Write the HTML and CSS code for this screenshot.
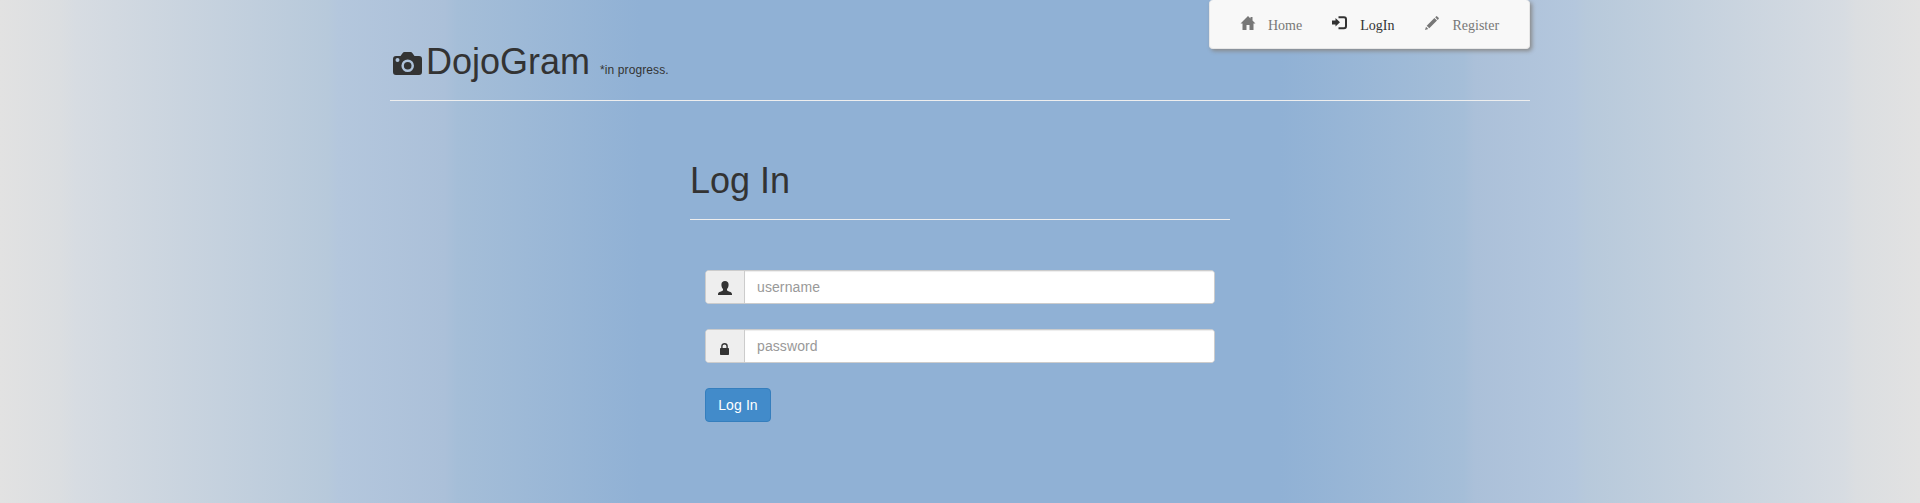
FILE: index.html
```html
<!DOCTYPE html>
<html lang="en">
<head>
<meta charset="utf-8">
<title>DojoGram</title>
<link rel="stylesheet" href="styles.css">
</head>
<body>
<div class="container">
  <header class="header">
    <h1 class="brand">
      <svg class="camera" viewBox="0 0 29 23"><path fill-rule="evenodd" d="M3 4H7.500L9.500 1.200Q10.300 0 11.500 0H17.500Q18.700 0 19.500 1.200L21.500 4H26Q29 4 29 7V20Q29 23 26 23H3Q0 23 0 20V7Q0 4 3 4ZM14.700 7.400A6.300 6.300 0 1 0 14.700 20A6.300 6.300 0 1 0 14.700 7.400ZM4.500 6A2 2 0 1 0 4.500 10A2 2 0 1 0 4.500 6Z"/><circle cx="14.700" cy="13.700" r="3.800"/></svg>
      <span>DojoGram</span>
      <small class="note">*in progress.</small>
    </h1>
    <nav class="nav">
      <a class="link"><svg class="icon" viewBox="0 0 14 14"><path d="M7 0L9.500 2.500V1H11.500V4.500L14.500 7.500H12.500V14H8.500V9H5.500V14H1.500V7.500H-.5Z"/></svg><span>Home</span></a>
      <a class="link active"><svg class="icon login" viewBox="0 0 15 14"><path d="M0 4.500H3.500V2L8 6.200L3.500 10.500V8.500H0Z"/><path d="M6.500 1.200H12Q14 1.200 14 3.200V10Q14 12.200 12 12.200H6.500" fill="none" stroke="currentColor" stroke-width="2"/></svg><span>LogIn</span></a>
      <a class="link register"><svg class="icon" viewBox="0 0 14 14"><path d="M0 14L1 10.700L3.300 13ZM1.700 9.700L9.400 2L12 4.600L4.300 12.300ZM10.200 1.300L11 .4Q11.600-.2 12.200.4L13.600 1.800Q14.200 2.400 13.600 3L12.700 3.900Z"/></svg><span>Register</span></a>
    </nav>
  </header>
  <main class="panel">
    <h1 class="title">Log In</h1>
    <form class="form">
      <div class="group">
        <span class="addon"><svg class="user" viewBox="0 0 14 14"><path d="M7 0C9.200 0 10.600 1.300 10.600 3.700C10.600 5.500 9.900 7 9 8V9.300C9.800 10.800 13.800 10.500 14 13V14H0V13C.2 10.500 4.200 10.800 5 9.300V8C4.100 7 3.400 5.500 3.400 3.700C3.400 1.300 4.800 0 7 0Z"/></svg></span>
        <input class="field" type="text" placeholder="username">
      </div>
      <div class="group">
        <span class="addon"><svg class="lock" viewBox="0 0 9 12"><path d="M1.900 5V3.200C1.900 0 7.100 0 7.100 3.200V5" fill="none" stroke="currentColor" stroke-width="1.400"/><rect y="5" width="9" height="7" rx=".8"/></svg></span>
        <input class="field" type="password" placeholder="password">
      </div>
      <button class="submit" type="button">Log In</button>
    </form>
  </main>
</div>
</body>
</html>
```
FILE: styles.css
```css
* { box-sizing: border-box; }
body {
  margin: 0;
  min-height: 503px;
  color: #333;
  font: 14px/20px "Liberation Sans", Arial, sans-serif;
  background: linear-gradient(to right,
    #e2e2e2 0, #dbdee1 60px, #d7dce2 76px, #b7c9db 328px, #b4c7dd 338px,
    #abc0d9 445px, #a5bed8 457px, #90b1d5 640px,
    #90b1d5 1280px, #a5bed8 1464px, #abc0d9 1475px,
    #b4c7dd 1575px, #b7c9db 1586px, #d7dce2 1844px, #dbdee1 1856px, #e2e2e2 1920px);
}
svg { display: block; fill: currentColor; overflow: visible; }
.container { width: 1140px; margin: 0 auto; }
.header {
  display: flex;
  justify-content: space-between;
  align-items: flex-start;
  height: 101px;
  border-bottom: 1px solid #eee;
}
.brand {
  display: flex;
  align-items: baseline;
  margin: 0;
  padding: 42px 0 0 3px;
  font-size: 36px;
  font-weight: 400;
  line-height: 40px;
}
.camera { width: 29px; height: 23px; margin: 10px 4px 0 0; align-self: flex-start; }
.note { margin-left: 10px; font-size: 12px; letter-spacing: .1px; }
.nav {
  display: flex;
  width: 321px;
  height: 49px;
  padding: 15px 0 0 31px;
  border: 1px solid #e7e7e7;
  border-top: 0;
  border-radius: 4px;
  background: #f8f8f8;
  box-shadow: 2px 2px 4px #888;
  font-family: "Liberation Serif", "Times New Roman", serif;
}
.link { display: flex; gap: 13px; margin-right: 30px; color: #777; }
.link span { padding-top: 1px; }
.register { margin: 0 0 0 1px; }
.active { color: #333; }
.icon { width: 14px; height: 14px; margin-top: 1px; }
.login { width: 15px; }
.panel { width: 540px; margin: 0 auto; }
.title {
  height: 119px;
  margin: 0;
  padding-top: 60px;
  border-bottom: 1px solid #eee;
  font-size: 36px;
  font-weight: 400;
  line-height: 40px;
}
.form { display: flex; flex-direction: column; align-items: flex-start; gap: 25px; padding: 50px 15px 0; }
.group {
  display: flex;
  width: 510px;
  height: 34px;
  border: 1px solid #ccc;
  border-radius: 4px;
  overflow: hidden;
  background: #fff;
}
.addon {
  display: flex;
  justify-content: center;
  align-items: center;
  width: 39px;
  padding-top: 2px;
  border-right: 1px solid #ccc;
  background: #eee;
}
.user { width: 14px; height: 14px; }
.lock { width: 9px; height: 12px; margin: 4px 1px 0 0; }
.field {
  flex: 1;
  padding: 0 12px;
  border: 0;
  outline: 0;
  font: 14px/20px "Liberation Sans", Arial, sans-serif;
  letter-spacing: .1px;
  box-shadow: inset 0 1px 1px rgba(0,0,0,.075);
}
.field::placeholder { color: #999; opacity: 1; }
.submit {
  width: 66px;
  height: 34px;
  padding: 0;
  border: 1px solid #357ebd;
  border-radius: 4px;
  color: #fff;
  background: #428bca;
  font: 14px/20px "Liberation Sans", Arial, sans-serif;
  letter-spacing: .1px;
}
```
